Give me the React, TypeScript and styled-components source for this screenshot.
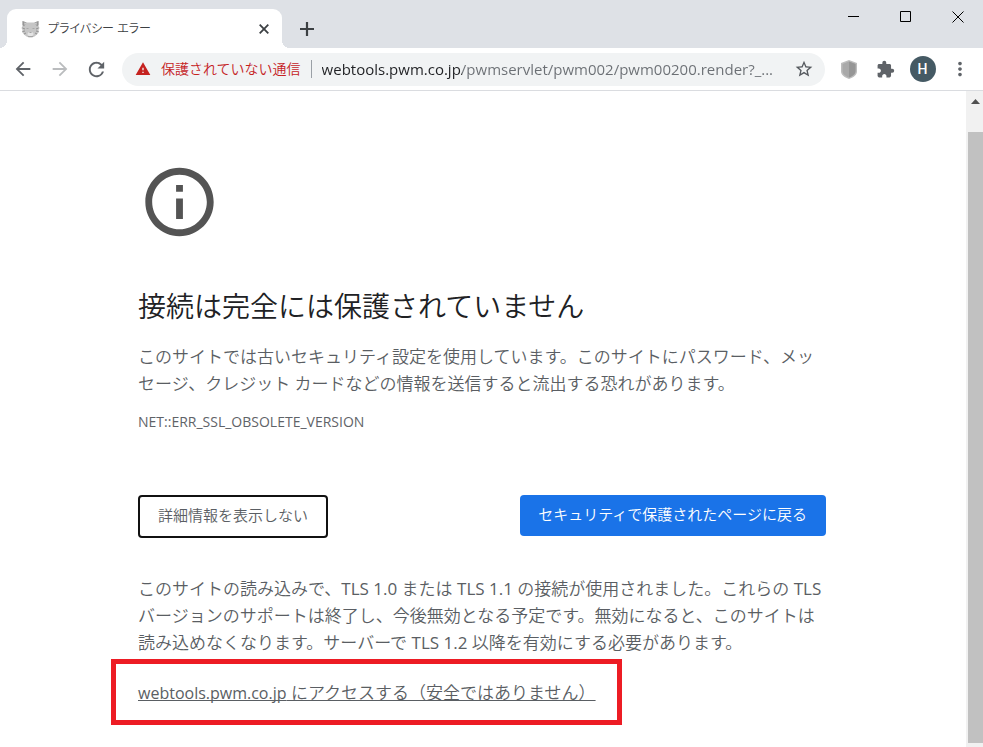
import React, { useState } from "react";
import styled, { createGlobalStyle } from "styled-components";
import {
  MdArrowBack,
  MdArrowForward,
  MdRefresh,
  MdStarBorder,
  MdExtension,
  MdMoreVert,
  MdWarning,
  MdInfoOutline,
} from "react-icons/md";

const GlobalStyle = createGlobalStyle`
  *, *::before, *::after { box-sizing: border-box; }
  body {
    margin: 0;
    background: #fff;
    font-family: "Open Sans", "Noto Sans CJK JP DemiLight", "Noto Sans CJK JP", sans-serif;
    color: #5a5e63;
  }
  button, input { font: inherit; color: inherit; }
`;

const Browser = styled.div`
  display: flex;
  flex-direction: column;
  height: 100vh;
  overflow: hidden;
`;

const TabStrip = styled.header`
  display: flex;
  align-items: flex-end;
  flex: none;
  height: 48px;
  padding-left: 7px;
  background: #dee1e6;
`;

const Tab = styled.div`
  position: relative;
  display: flex;
  align-items: center;
  gap: 8px;
  width: 275px;
  height: 39px;
  padding: 0 9px 0 14px;
  background: #fff;
  border-radius: 9px 9px 0 0;

  &::before,
  &::after {
    content: "";
    position: absolute;
    bottom: 0;
    width: 8px;
    height: 8px;
  }
  &::before {
    right: 100%;
    background: radial-gradient(circle at 0 0, transparent 8px, #fff 8px);
  }
  &::after {
    left: 100%;
    background: radial-gradient(circle at 100% 0, transparent 8px, #fff 8px);
  }
`;

const TabTitle = styled.span`
  flex: 1;
  font-size: 12px;
  line-height: 20px;
  white-space: nowrap;
  color: #3c4043;
  font-feature-settings: "palt";
`;

const PlainButton = styled.button<{ $w: number; $h: number }>`
  display: flex;
  align-items: center;
  justify-content: center;
  flex: none;
  width: ${(p) => p.$w}px;
  height: ${(p) => p.$h}px;
  padding: 0;
  border: 0;
  background: none;
`;

const NewTabButton = styled(PlainButton)`
  margin-left: 6px;
`;

const WindowControls = styled.div`
  display: flex;
  align-self: flex-start;
  margin-left: auto;
`;

const Toolbar = styled.nav`
  display: flex;
  align-items: center;
  flex: none;
  height: 43px;
  padding: 0 5px 0 4px;
  border-bottom: 1px solid #dadce0;
  background: #fff;
`;

const AddressBar = styled.div`
  display: flex;
  align-items: center;
  flex: 1;
  min-width: 0;
  height: 33px;
  margin: 0 5px 0 7px;
  padding: 0 11px 0 13px;
  border-radius: 17px;
  background: #f1f3f4;
`;

const SecurityChip = styled.button`
  display: flex;
  align-items: center;
  flex: none;
  gap: 10px;
  padding: 0 10px 0 0;
  border: 0;
  background: none;
  color: #c5221f;
  font-size: 14px;
  line-height: 24px;
  white-space: nowrap;
`;

const Divider = styled.span`
  flex: none;
  width: 1px;
  height: 18px;
  background: #9aa0a6;
`;

const UrlInput = styled.input`
  flex: 1;
  min-width: 0;
  height: 24px;
  margin: 0 8px 0 10px;
  padding: 0;
  border: 0;
  outline: 0;
  font-size: 15px;
  text-overflow: ellipsis;
  color: transparent;
  caret-color: #202124;
  background: linear-gradient(90deg, #202124 140px, #6b6f74 140px);
  background-clip: text;
  -webkit-background-clip: text;
`;

const Avatar = styled.span`
  display: flex;
  align-items: center;
  justify-content: center;
  width: 26px;
  height: 26px;
  border-radius: 50%;
  background: #455a64;
  color: #fff;
  font-family: Roboto, sans-serif;
  font-size: 14px;
  font-weight: 500;
`;

const Viewport = styled.div`
  display: flex;
  flex: 1;
  min-height: 0;
`;

const Page = styled.main`
  flex: 1;
  min-width: 0;
  padding: 70px 2px 0 0;
  overflow: hidden;
`;

const Interstitial = styled.article`
  width: 100%;
  max-width: 688px;
  margin: 0 auto;
`;

const InfoIcon = styled(MdInfoOutline)`
  display: block;
  width: 83px;
  height: 82px;
  color: #545454;
`;

const Heading = styled.h1`
  margin: 46px 0 19px;
  font-size: 28px;
  font-weight: 400;
  line-height: 35px;
  color: #202124;
`;

const Paragraph = styled.p`
  margin: 0;
  font-size: 17px;
  line-height: 27px;
`;

const ErrorCode = styled.div`
  margin-top: 13px;
  font-size: 14px;
  line-height: 24px;
  color: #5f6368;
`;

const Actions = styled.div`
  display: flex;
  justify-content: space-between;
  align-items: flex-start;
  margin: 61px 0 37px;
`;

const DetailsButton = styled.button`
  height: 43px;
  padding: 0 18px 4px;
  border: 2px solid #111;
  border-radius: 4px;
  background: #fff;
  font-size: 15px;
`;

const SafetyButton = styled.button`
  height: 41px;
  padding: 0 19px 4px 18px;
  border: 0;
  border-radius: 4px;
  background: #1a73e8;
  color: #fff;
  font-size: 15px;
`;

const ProceedRow = styled.div`
  position: relative;
  width: fit-content;
  margin-top: 23px;
  font-size: 17px;
  line-height: 27px;
  white-space: nowrap;

  a {
    color: inherit;
    text-decoration: underline;
    text-decoration-skip-ink: none;
  }
`;

const Host = styled.span`
  font-size: 16px;
`;

const Highlight = styled.div`
  position: absolute;
  inset: -20px -26px -18px -27px;
  border: 5px solid #ed1c24;
  pointer-events: none;
`;

const ScrollTrack = styled.div`
  display: flex;
  flex-direction: column;
  flex: none;
  width: 17px;
  padding: 0 0 4px 2px;
  background: #f1f1f1;
`;

const ScrollThumb = styled.div`
  flex: 1;
  margin-top: 20px;
  background: #c1c1c1;
`;

const Favicon = () => (
  <svg width="19" height="18" viewBox="0 0 19 18" aria-hidden="true">
    <path
      d="M1.500 1l4 1.500h8l4-1.500v5l1 2-1 2 .5 2-2 2.500-2.500 2-2.500 1h-3l-2.500-1L3 14.500 1 12l.5-2-1-2 1-2z"
      fill="#c6c6c6"
    />
    <path d="M1.500 1l4 1.500L3 6.500 1.500 5zM17.500 1l-4 1.500L16 6.500l1.500-1.500z" fill="#979797" />
    <path d="M3.500 2.500l1.500.5-1.500 2zM15.500 2.500L14 3l1.500 2z" fill="#e6e6e6" />
    <path d="M1.500 8L4 9M1.500 11.500L4 11M3 14l2-1M17.500 8L15 9M17.500 11.500L15 11M16 14l-2-1" stroke="#909090" />
    <path d="M5.500 8.500h2M11.500 8.500h2" stroke="#a8a8a8" />
    <ellipse cx="9.500" cy="14" rx="3" ry="2" fill="#e4e4e4" />
    <path d="M8.500 12.500h2M7 16.500h5" stroke="#a5a5a5" />
  </svg>
);

const Shield = () => (
  <svg width="16" height="19" viewBox="0 0 16 19" aria-hidden="true">
    <path d="M8 0l8 3v8c0 4-3 6-8 8-5-2-8-4-8-8V3z" fill="#bdbdbd" />
    <path d="M8 1.500l6.500 2.500v7c0 3-2.500 5-6.500 6.500C4 16 1.500 14 1.500 11V4z" fill="#a9a9a9" />
    <path d="M8 1.500l6.500 2.500v7c0 3-2.500 5-6.500 6.500z" fill="#969696" />
  </svg>
);

const URL_TEXT = "webtools.pwm.co.jp/pwmservlet/pwm002/pwm00200.render?_...";

export default function App() {
  const [url, setUrl] = useState(URL_TEXT);
  return (
    <Browser>
      <GlobalStyle />
      <TabStrip>
        <Tab>
          <Favicon />
          <TabTitle>プライバシー エラー</TabTitle>
          <PlainButton $w={18} $h={18} aria-label="タブを閉じる">
            <svg width="10" height="10" viewBox="0 0 10 10">
              <path d="M.7.7l8.600 8.600M9.300.7L.7 9.300" stroke="#3c4043" strokeWidth="1.800" />
            </svg>
          </PlainButton>
        </Tab>
        <NewTabButton $w={38} $h={38} aria-label="新しいタブ">
          <svg width="14" height="14" viewBox="0 0 14 14">
            <path d="M7 0v14M0 7h14" stroke="#3c4043" strokeWidth="2.200" />
          </svg>
        </NewTabButton>
        <WindowControls>
          <PlainButton $w={52} $h={33} aria-label="最小化">
            <svg width="11" height="11" viewBox="0 0 11 11">
              <path d="M0 5.500h11" stroke="#000" />
            </svg>
          </PlainButton>
          <PlainButton $w={52} $h={33} aria-label="最大化">
            <svg width="11" height="11" viewBox="0 0 11 11">
              <path d="M.5.5h10v10H.5z" stroke="#000" fill="none" />
            </svg>
          </PlainButton>
          <PlainButton $w={52} $h={33} aria-label="閉じる">
            <svg width="13" height="13" viewBox="0 0 13 13">
              <path d="M1.500 1.500l11 11M12.500 1.500l-11 11" stroke="#000" />
            </svg>
          </PlainButton>
        </WindowControls>
      </TabStrip>

      <Toolbar>
        <PlainButton $w={37} $h={37} aria-label="戻る">
          <MdArrowBack size={22} color="#5f6368" />
        </PlainButton>
        <PlainButton $w={37} $h={37} aria-label="進む" disabled>
          <MdArrowForward size={22} color="#babcbe" />
        </PlainButton>
        <PlainButton $w={37} $h={37} aria-label="再読み込み">
          <MdRefresh size={23} color="#5f6368" />
        </PlainButton>
        <AddressBar>
          <SecurityChip>
            <MdWarning size={16} />
            <span>保護されていない通信</span>
          </SecurityChip>
          <Divider />
          <UrlInput
            aria-label="アドレス"
            spellCheck={false}
            value={url}
            onChange={(e) => setUrl(e.target.value)}
          />
          <PlainButton $w={20} $h={24} aria-label="ブックマーク">
            <MdStarBorder size={20} color="#55595e" />
          </PlainButton>
        </AddressBar>
        <PlainButton $w={37} $h={37} aria-label="保護">
          <Shield />
        </PlainButton>
        <PlainButton $w={37} $h={37} aria-label="拡張機能">
          <MdExtension size={19} color="#5f6368" />
        </PlainButton>
        <PlainButton $w={37} $h={37} aria-label="プロフィール">
          <Avatar>H</Avatar>
        </PlainButton>
        <PlainButton $w={37} $h={37} aria-label="メニュー">
          <MdMoreVert size={22} color="#5f6368" />
        </PlainButton>
      </Toolbar>

      <Viewport>
        <Page>
          <Interstitial>
            <InfoIcon />
            <Heading>接続は完全には保護されていません</Heading>
            <Paragraph>
              このサイトでは古いセキュリティ設定を使用しています。このサイトにパスワード、メッセージ、クレジット カードなどの情報を送信すると流出する恐れがあります。
            </Paragraph>
            <ErrorCode>NET::ERR_SSL_OBSOLETE_VERSION</ErrorCode>
            <Actions>
              <DetailsButton>詳細情報を表示しない</DetailsButton>
              <SafetyButton>セキュリティで保護されたページに戻る</SafetyButton>
            </Actions>
            <Paragraph>
              このサイトの読み込みで、TLS 1.0 または TLS 1.1 の接続が使用されました。これらの TLS バージョンのサポートは終了し、今後無効となる予定です。無効になると、このサイトは読み込めなくなります。サーバーで TLS 1.2 以降を有効にする必要があります。
            </Paragraph>
            <ProceedRow>
              <a href="#proceed"><Host>webtools.pwm.co.jp</Host> にアクセスする（安全ではありません）</a>
              <Highlight />
            </ProceedRow>
          </Interstitial>
        </Page>
        <ScrollTrack aria-hidden="true">
          <svg width="15" height="21" viewBox="0 0 15 21">
            <path d="M3 13l4.500-5 4.500 5z" fill="#505050" />
          </svg>
          <ScrollThumb />
        </ScrollTrack>
      </Viewport>
    </Browser>
  );
}
